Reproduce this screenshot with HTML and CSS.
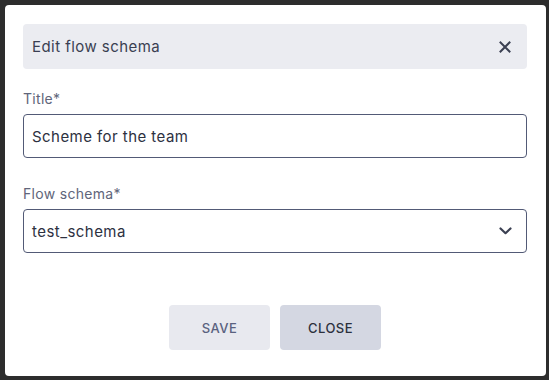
FILE: index.html
```html
<!DOCTYPE html>
<html>
<head>
<meta charset="utf-8">
<link rel="stylesheet" href="styles.css">
</head>
<body>
<div class="backdrop">
  <div class="dialog">
    <div class="header">
      <span class="title">Edit flow schema</span>
      <svg class="close-x" width="12" height="12" viewBox="0 0 12 12"><path d="M1.5 1.5 L10.5 10.5 M10.5 1.5 L1.5 10.5" stroke="#3b4052" stroke-width="2" stroke-linecap="square" fill="none"/></svg>
    </div>
    <div class="field">
      <label class="label">Title*</label>
      <div class="input">Scheme for the team</div>
    </div>
    <div class="field">
      <label class="label">Flow schema*</label>
      <div class="input select">
        <span>test_schema</span>
        <svg width="13" height="8" viewBox="0 0 13 8"><path d="M1.5 1.5 L6.5 6.2 L11.5 1.5" stroke="#3b4052" stroke-width="2.2" fill="none" stroke-linecap="round" stroke-linejoin="round"/></svg>
      </div>
    </div>
    <div class="actions">
      <button class="btn save">SAVE</button>
      <button class="btn close">CLOSE</button>
    </div>
  </div>
</div>
</body>
</html>
```
FILE: styles.css
```css
html, body {
  margin: 0;
  padding: 0;
  background: #2d2d2d;
  font-family: Inter, "Noto Sans", sans-serif;
}
.backdrop {
  width: 549px;
  height: 380px;
  padding: 5px 3px 4px 5px;
  box-sizing: border-box;
}
.dialog {
  background: #fff;
  border-radius: 4px;
  height: 371px;
  padding: 19px 19px 0 18px;
  box-sizing: border-box;
  display: flex;
  flex-direction: column;
}
.header {
  height: 45px;
  background: #ebecf1;
  border-radius: 4px;
  display: flex;
  align-items: center;
  justify-content: space-between;
  padding: 0 16px 0 9px;
}
.title {
  font-size: 15px;
  letter-spacing: 0.45px;
  color: #3a3f52;
}
.close-x { display: block; }
.field {
  display: flex;
  flex-direction: column;
}
.header + .field { margin-top: 20px; }
.field + .field { margin-top: 26px; }
.label {
  font-size: 14px;
  letter-spacing: 0.3px;
  color: #60657a;
  line-height: 20px;
  margin-bottom: 5px;
}
.input {
  height: 44px;
  box-sizing: border-box;
  border: 1px solid #525a76;
  border-radius: 4px;
  padding: 0 14px 0 8px;
  display: flex;
  align-items: center;
  font-size: 15px;
  letter-spacing: 0.45px;
  color: #2d313f;
}
.select { justify-content: space-between; }
.select svg { display: block; }
.actions {
  margin-top: 52px;
  display: flex;
  justify-content: center;
  gap: 10px;
}
.btn {
  width: 101px;
  height: 45px;
  border: none;
  border-radius: 4px;
  font-family: Inter, "Noto Sans", sans-serif;
  font-size: 13px;
  font-weight: 500;
  letter-spacing: 0.5px;
}
.save { background: #e8e9ef; color: #5a6280; }
.close { background: #d4d7e2; color: #2c303d; }
```
